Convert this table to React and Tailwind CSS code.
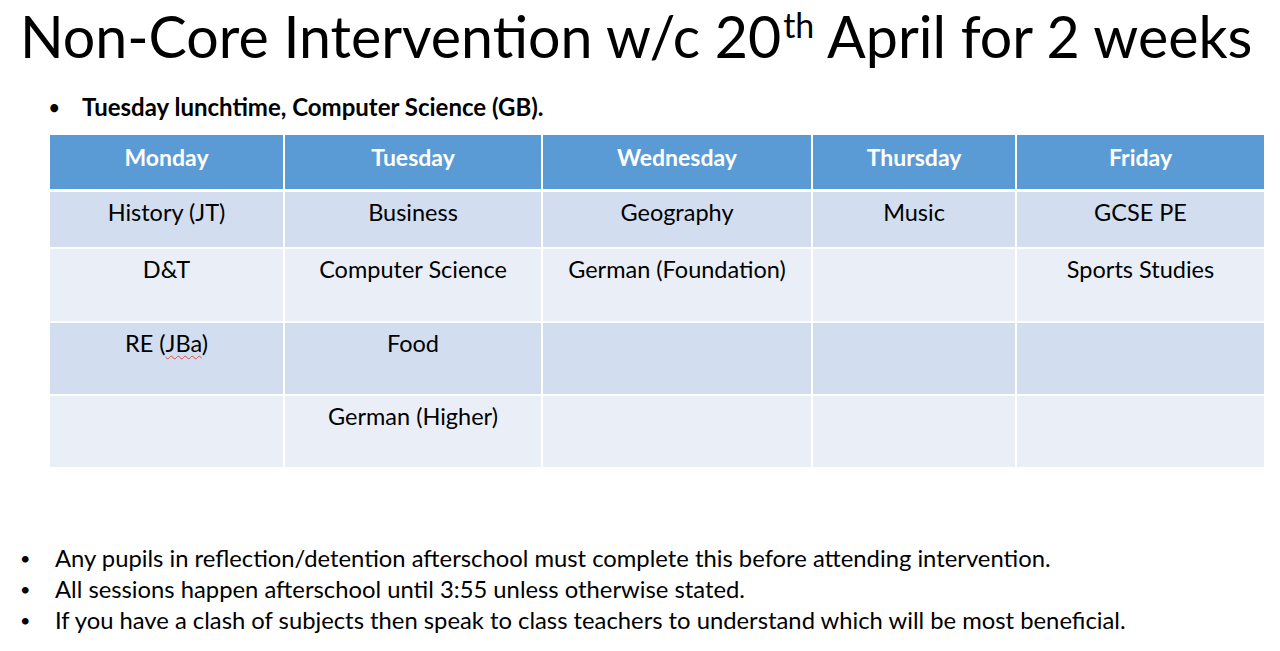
import React from "react";

const cols = "grid grid-cols-[233px_256px_268px_202px_247px] gap-x-[2px]";
const font = { fontFamily: "Lato, 'Open Sans', sans-serif" };

const rows = [
  { h: "h-[55px]", bg: "bg-[#D2DEEF]", cells: ["History (JT)", "Business", "Geography", "Music", "GCSE PE"] },
  { h: "h-[72px]", bg: "bg-[#EAEFF7]", cells: ["D&T", "Computer Science", "German (Foundation)", "", "Sports Studies"] },
  { h: "h-[71px]", bg: "bg-[#D2DEEF]", cells: ["RE (JBa)", "Food", "", "", ""] },
  { h: "h-[71px]", bg: "bg-[#EAEFF7]", cells: ["", "German (Higher)", "", "", ""] },
];

function Cell({ text }) {
  if (text === "RE (JBa)") {
    return (
      <span>
        RE (<span className="underline decoration-wavy decoration-[#e04a4a] decoration-1 underline-offset-[3px]">JBa</span>)
      </span>
    );
  }
  return <span>{text}</span>;
}

export default function App() {
  return (
    <div className="w-[1280px] h-[651px] bg-white text-black overflow-hidden" style={font}>
      <h1 className="pt-[4px] pl-[20px] h-[68px] text-[57.3px] leading-[64px] font-normal whitespace-nowrap">
        Non-Core Intervention w/c 20
        <span className="inline-block align-top text-[34px] leading-[34px] mt-[4px] ml-[2px]">th</span> April for 2 weeks
      </h1>
      <div className="mt-[25px] flex items-center h-[28px] text-[24px] font-bold">
        <span className="w-[82px] pl-[49px] text-[18px]">•</span>
        <span>Tuesday lunchtime, Computer Science (GB).</span>
      </div>
      <div className="mt-[14px] ml-[50px] w-[1214px] text-[23.5px]">
        <div className={`${cols} h-[54px] mb-[3px]`}>
          {["Monday", "Tuesday", "Wednesday", "Thursday", "Friday"].map((d) => (
            <div key={d} className="bg-[#5B9BD5] text-white font-bold flex items-center justify-center pb-[10px] text-[23px]">
              {d}
            </div>
          ))}
        </div>
        {rows.map((r, i) => (
          <div key={i} className={`${cols} ${r.h} mb-[2px]`}>
            {r.cells.map((c, j) => (
              <div key={j} className={`${r.bg} text-center pt-[7px] leading-[26px]`}>
                <Cell text={c} />
              </div>
            ))}
          </div>
        ))}
      </div>
      <ul className="mt-[76px] text-[23.8px] leading-[31px]">
        {[
          "Any pupils in reflection/detention afterschool must complete this before attending intervention.",
          "All sessions happen afterschool until 3:55 unless otherwise stated.",
          "If you have a clash of subjects then speak to class teachers to understand which will be most beneficial.",
        ].map((t) => (
          <li key={t} className="flex">
            <span className="w-[55px] pl-[20px] text-[18px]">•</span>
            <span className="whitespace-nowrap">{t}</span>
          </li>
        ))}
      </ul>
    </div>
  );
}
